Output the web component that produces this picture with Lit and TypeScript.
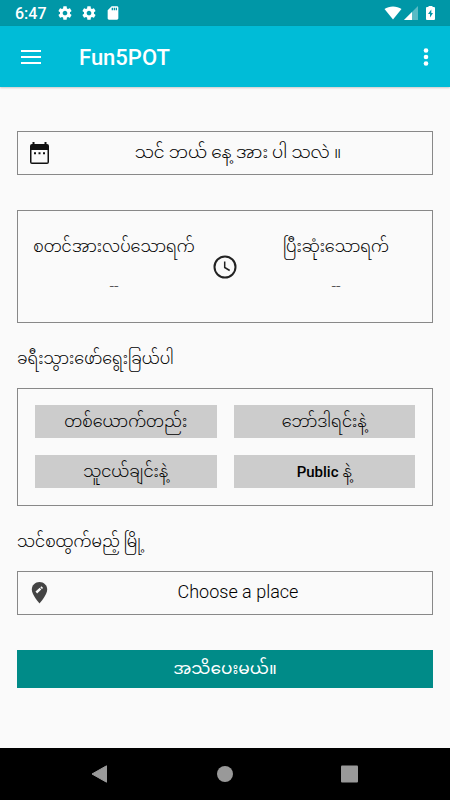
import { LitElement, html, css, svg } from "lit";
import { customElement } from "lit/decorators.js";

const gear = svg`<path fill="currentColor" d="M19.43 12.98c.04-.32.07-.64.07-.98s-.03-.66-.07-.98l2.11-1.65c.19-.15.24-.42.12-.64l-2-3.46c-.12-.22-.39-.3-.61-.22l-2.49 1c-.52-.4-1.08-.73-1.69-.98l-.38-2.65C14.46 2.18 14.25 2 14 2h-4c-.25 0-.46.18-.49.42l-.38 2.65c-.61.25-1.17.59-1.69.98l-2.49-1c-.23-.09-.49 0-.61.22l-2 3.46c-.13.22-.07.49.12.64l2.11 1.65c-.04.32-.07.65-.07.98s.03.66.07.98l-2.11 1.65c-.19.15-.24.42-.12.64l2 3.46c.12.22.39.3.61.22l2.49-1c.52.4 1.08.73 1.69.98l.38 2.65c.03.24.24.42.49.42h4c.25 0 .46-.18.49-.42l.38-2.65c.61-.25 1.17-.59 1.69-.98l2.49 1c.23.09.49 0 .61-.22l2-3.46c.12-.22.07-.49-.12-.64l-2.11-1.65zM12 15.5c-1.93 0-3.5-1.57-3.5-3.5s1.57-3.5 3.5-3.5 3.5 1.57 3.5 3.5-1.57 3.5-3.5 3.5z"/>`;

@customElement("app-root")
export class AppRoot extends LitElement {
  static styles = css`
    :host {
      display: flex;
      flex-direction: column;
      min-height: 100vh;
      background: #fafafa;
      color: #000;
      font-family: Roboto, "Noto Sans Myanmar", "Noto Sans", sans-serif;
      font-size: 16px;
      font-weight: 300;
      line-height: 24px;
    }
    * { box-sizing: border-box; }
    svg { display: block; flex: none; }
    button {
      font: inherit;
      color: inherit;
      border: 0;
      padding: 0;
      background: none;
      cursor: pointer;
    }
    .status {
      display: flex;
      align-items: center;
      height: 26px;
      padding: 0 15px;
      background: #0097a7;
      color: #fff;
      font-weight: 500;
    }
    .left { display: flex; align-items: center; gap: 8px; flex: 1; }
    .time { margin-right: 2px; padding-top: 2px; }
    .right { display: flex; align-items: center; gap: 2px; }
    .battery { margin-left: 6px; }
    .bar {
      display: flex;
      align-items: center;
      height: 61px;
      padding: 0 10px 0 17px;
      background: #00bcd7;
      color: #fff;
      box-shadow: 0 1px 2px #0003;
    }
    .title {
      flex: 1;
      margin: 0 0 0 34px;
      padding-top: 2px;
      font-size: 22px;
      font-weight: 500;
    }
    main {
      flex: 1;
      display: flex;
      flex-direction: column;
      padding: 44px 17px;
    }
    .box { border: 1px solid #888; }
    .field {
      display: flex;
      align-items: center;
      width: 100%;
      height: 44px;
      padding: 0 8px 0 10px;
      font-size: 17px;
      border: 1px solid #888;
    }
    .field span { flex: 1; padding-bottom: 2px; }
    .place { font-size: 18px; }
    .dates {
      display: grid;
      grid-template-columns: 1fr 30px 1fr;
      align-items: center;
      justify-items: center;
      height: 113px;
      margin-top: 35px;
    }
    .date { text-align: center; }
    .date p { margin: 0 0 16px; white-space: nowrap; }
    .none { color: #444; display: block; }
    h2 {
      margin: 24px 0 17px;
      font-size: 16px;
      line-height: 24px;
      font-weight: 300;
    }
    .choices {
      display: grid;
      grid-template-columns: 1fr 1fr;
      gap: 17px;
      padding: 16px 17px 17px;
    }
    .choice {
      height: 33px;
      background: #ccc;
    }
    .latin { font-size: 15px; font-weight: 500; }
    .submit {
      height: 38px;
      margin-top: 35px;
      padding-bottom: 3px;
      background: #008b88;
      color: #fff;
      font-size: 17px;
      font-weight: 400;
    }
    nav {
      display: flex;
      justify-content: space-between;
      align-items: center;
      height: 52px;
      padding: 0 90px 0 89px;
      background: #000;
      color: #999;
    }
  `;

  render() {
    return html`
      <div class="status">
        <div class="left">
          <span class="time">6:47</span>
          <svg width="16" height="16" viewBox="0 0 24 24">${gear}</svg>
          <svg width="16" height="16" viewBox="0 0 24 24">${gear}</svg>
          <svg width="16" height="16" viewBox="0 0 24 24"><path fill="currentColor" d="M18 2h-8L4 8v12c0 1.100.9 2 2 2h12c1.100 0 2-.9 2-2V4c0-1.100-.9-2-2-2zm-6 6h-2V4h2v4zm3 0h-2V4h2v4zm3 0h-2V4h2v4z"/></svg>
        </div>
        <div class="right">
          <svg width="18" height="14" viewBox="0 0 18 14"><path fill="#fff" d="M9 13.500 .5 3C5-.5 13-.5 17.500 3z"/></svg>
          <svg width="14" height="14" viewBox="0 0 14 14"><path fill="#fff" opacity=".35" d="M14 0v14H0z"/><path fill="#fff" d="M8 6v8H0z"/></svg>
          <svg class="battery" width="9" height="14" viewBox="0 0 9 14"><path fill="#fff" d="M2.500 1V0h4v1H8q1 0 1 1v11q0 1-1 1H1q-1 0-1-1V2q0-1 1-1z"/><path fill="#0097a7" d="M5.300 3.500 2 8h2v3.500L7 7H5.300z"/></svg>
        </div>
      </div>
      <header class="bar">
        <button aria-label="Menu"><svg width="28" height="28" viewBox="0 0 28 28"><path stroke="#fff" stroke-width="2" d="M4 8h20M4 14h20M4 20h20"/></svg></button>
        <h1 class="title">Fun5POT</h1>
        <button aria-label="More options"><svg width="28" height="28" viewBox="0 0 28 28" fill="#fff"><circle cx="14" cy="7.500" r="2.300"/><circle cx="14" cy="14" r="2.300"/><circle cx="14" cy="20.500" r="2.300"/></svg></button>
      </header>
      <main>
        <button class="field">
          <svg width="24" height="24" viewBox="0 0 24 24"><path fill="#111" fill-rule="evenodd" d="M4.500 1h2v2h10V1h2v2h.5q2 0 2 2v16q0 2-2 2H4q-2 0-2-2V5q0-2 2-2h.5zM3.500 9v12.500h16V9z"/><path fill="#111" d="M6 11.300h2v2H6zM10.500 11.300h2v2h-2zM15 11.300h2v2h-2z"/></svg>
          <span>သင် ဘယ် နေ့ အား ပါ သလဲ ။</span>
        </button>
        <section class="box dates">
          <div class="date"><p>စတင်အားလပ်သောရက်</p><span class="none">--</span></div>
          <svg width="24" height="24" viewBox="0 0 24 24" fill="none" stroke="#222"><circle cx="12" cy="12" r="10.500" stroke-width="2"/><path stroke-width="1.500" d="M11.700 6.500v6l5 3"/></svg>
          <div class="date"><p>ပြီးဆုံးသောရက်</p><span class="none">--</span></div>
        </section>
        <h2>ခရီးသွားဖော်ရွေးခြယ်ပါ</h2>
        <section class="box choices">
          <button class="choice">တစ်ယောက်တည်း</button>
          <button class="choice">ဘော်ဒါရင်းနဲ့</button>
          <button class="choice">သူငယ်ချင်းနဲ့</button>
          <button class="choice"><span class="latin">Public</span> နဲ့</button>
        </section>
        <h2>သင်စထွက်မည့် မြို့</h2>
        <button class="field place">
          <svg width="24" height="24" viewBox="0 0 24 24"><path fill="#444" d="M11.500 1C7.200 1 3.800 4.200 3.800 8.500 3.800 14 11.500 22.500 11.500 22.500S19.200 14 19.200 8.500C19.200 4.200 15.800 1 11.500 1z"/><path stroke="#fafafa" stroke-width="2.400" d="M8.300 11.500l4.200-3.800M13.100 7.200l1.200-1.100"/></svg>
          <span>Choose a place</span>
        </button>
        <button class="submit">အသိပေးမယ်။</button>
      </main>
      <nav aria-label="System">
        <button aria-label="Back"><svg width="20" height="20" viewBox="0 0 20 20"><path fill="currentColor" stroke="currentColor" stroke-linejoin="round" d="M3 10 17.500 1.800v16.400z"/></svg></button>
        <button aria-label="Home"><svg width="20" height="20" viewBox="0 0 20 20"><circle cx="10" cy="10" r="8" fill="currentColor"/></svg></button>
        <button aria-label="Recent apps"><svg width="20" height="20" viewBox="0 0 20 20"><rect x="1" y="1.500" width="17" height="17" rx="1" fill="currentColor"/></svg></button>
      </nav>
    `;
  }
}
